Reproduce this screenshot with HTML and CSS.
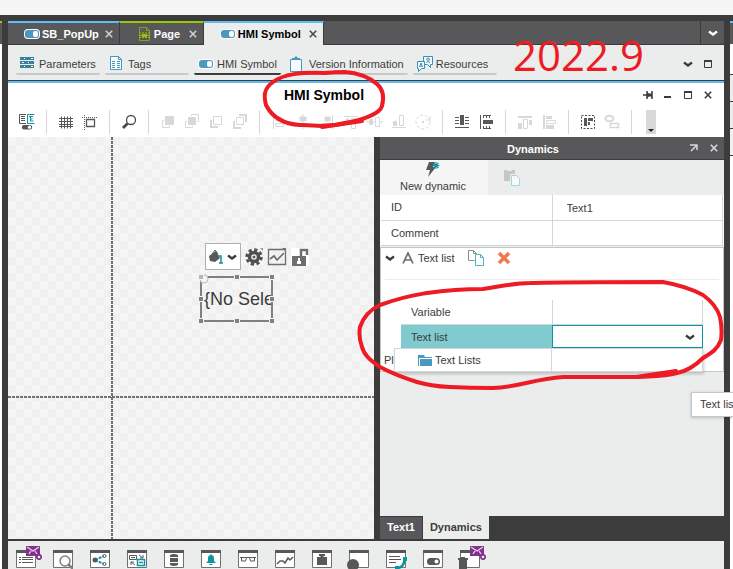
FILE: index.html
```html
<!DOCTYPE html>
<html lang="en">
<head>
    <meta charset="UTF-8">
    <title>HMI Symbol</title>
    <link rel="stylesheet" href="styles.css">
</head>
<body>

<svg width="0" height="0" class="defs">
    <defs>
        <symbol id="toggle" viewBox="0 0 16 10">
            <rect width="16" height="10" rx="4" fill="#fff"/>
            <rect x="1" y="1" width="14" height="8" rx="3" fill="#4a98bd"/>
            <rect x="9" y="2" width="5" height="6" rx="2" fill="#fff"/>
        </symbol>
        <symbol id="chevron" viewBox="0 0 10 10">
            <path d="M1 3.500l4 3 4-3" fill="none" stroke="currentColor" stroke-width="2.300"/>
        </symbol>
        <symbol id="close" viewBox="0 0 10 10">
            <path d="M1 1l8 8M9 1l-8 8" fill="none" stroke="currentColor" stroke-width="2"/>
        </symbol>
        <symbol id="box" viewBox="0 0 10 10">
            <path d="M1.500 1.500h7v7h-7z" fill="none" stroke="currentColor"/>
            <path d="M1 2h8" stroke="currentColor" stroke-width="2"/>
        </symbol>
        <!-- small window frame shared by the editors bar -->
        <symbol id="frame" viewBox="0 0 20 18">
            <path d="M.5.5h19v17H.5z" fill="#fff" stroke="#707072"/>
            <path d="M0 0h20v3H0z" fill="#58585a"/>
        </symbol>
        <symbol id="mail" viewBox="0 0 16 14">
            <path d="M0 0h14v10H0z" fill="#84318e"/>
            <path d="M1 1l6 4 6-4M3 8l2-3M11 8L9 5" fill="none" stroke="#e6d4e8" stroke-width="1.300"/>
            <circle cx="13" cy="11" r="2.200" fill="#ebedec" stroke="#84318e" stroke-width="1.700"/>
        </symbol>
    </defs>
</svg>

<div class="desktop">
    <div class="behind behind--left"></div>

    <main class="window">
        <nav class="tabs">
            <div class="tab">
                <svg class="tab__icon" width="16" height="10"><use href="#toggle"/></svg>
                <span>SB_PopUp</span>
                <button class="tab__close" aria-label="Close SB_PopUp"><svg width="8" height="8"><use href="#close"/></svg></button>
            </div>
            <div class="tab tab--page">
                <svg class="tab__icon" width="16" height="14" viewBox="0 0 16 14">
                    <path d="M3.500.5h7l3 3v10h-10z" fill="none" stroke="#7fa01a"/>
                    <path d="M10.500.5v3h3" fill="none" stroke="#7fa01a"/>
                    <path d="M3 6h11M3 10.500h11" stroke="#97bf0d" stroke-dasharray="2 1"/>
                    <path d="M6 7h5v3H6z" fill="#97bf0d"/>
                    <path d="M3 8.500h11" stroke="#97bf0d"/>
                </svg>
                <span>Page</span>
                <button class="tab__close" aria-label="Close Page"><svg width="8" height="8"><use href="#close"/></svg></button>
            </div>
            <div class="tab tab--active">
                <svg class="tab__icon" width="16" height="10"><use href="#toggle"/></svg>
                <span>HMI Symbol</span>
                <button class="tab__close" aria-label="Close HMI Symbol"><svg width="8" height="8"><use href="#close"/></svg></button>
            </div>
            <button class="tabs__more" aria-label="All editors"><svg width="10" height="10"><use href="#chevron"/></svg></button>
        </nav>

        <nav class="subnav">
            <a class="subnav__item" href="#parameters">
                <svg width="16" height="16" viewBox="0 0 16 16" shape-rendering="crispEdges">
                    <path d="M0 1h14v3H0zM0 5h14v3H0zM0 9h14v3H0z" fill="#3b7f9b"/>
                    <path d="M4 2h1v1H4zM11 2h2v1h-2zM2 6h2v1H2zM8 6h1v1H8zM4 10h1v1H4zM11 10h2v1h-2z" fill="#fff"/>
                </svg>
                <span>Parameters</span>
            </a>
            <a class="subnav__item" href="#tags">
                <svg width="16" height="16" viewBox="0 0 16 16">
                    <path d="M1.500.5h8l3 3v10h-11z" fill="#fff" stroke="#4a98bd"/>
                    <path d="M9.500.5v3h3" fill="none" stroke="#4a98bd"/>
                    <path d="M3 5.500h3M8 5.500h3M3 7.500h3M8 7.500h3M3 9.500h3M8 9.500h3M3 11.500h3M8 11.500h3" stroke="#4a98bd"/>
                </svg>
                <span>Tags</span>
            </a>
            <a class="subnav__item subnav__item--current" href="#symbol">
                <svg width="16" height="10"><use href="#toggle"/></svg>
                <span>HMI Symbol</span>
            </a>
            <a class="subnav__item" href="#version">
                <svg width="16" height="16" viewBox="0 0 16 16">
                    <path d="M.5 3.500h11v12H.5z" fill="#f7fafa" stroke="#4a98bd"/>
                    <path d="M2 4V2h2l2-2 2 2h2v2z" fill="#4a98bd"/>
                </svg>
                <span>Version Information</span>
            </a>
            <a class="subnav__item" href="#resources">
                <svg width="16" height="16" viewBox="0 0 16 16" fill="#f7fafa" stroke="#3b8fb5">
                    <path d="M6.500.5h9v8h-2v3l-3-3h-4z"/>
                    <path d="M9 3h4M11 1.500V3M9.500 7L13 3.500M9.500 4L13 7" fill="none"/>
                    <path d="M.5 5.500h7v7h-3l-3 3v-3h-1z"/>
                    <path d="M2.500 11L4 7l1.500 4M3 10h2" fill="none"/>
                </svg>
                <span>Resources</span>
            </a>
            <div class="window-buttons">
                <button aria-label="More"><svg width="10" height="10"><use href="#chevron"/></svg></button>
                <button aria-label="Maximize"><svg width="10" height="10"><use href="#box"/></svg></button>
            </div>
        </nav>

        <header class="titlebar">
            <h1 class="titlebar__text">HMI Symbol</h1>
            <div class="window-buttons">
                <button aria-label="Pin"><svg width="10" height="10" viewBox="0 0 10 10"><path d="M0 5h4M4 1v8M9 1v8" stroke="#3c3c3c" stroke-width="1.500"/><path d="M4 2l2 1.500h2L9 2v6L8 6.500H6L4 8z" fill="#3c3c3c"/></svg></button>
                <button aria-label="Minimize"><svg width="10" height="10" viewBox="0 0 10 10"><path d="M1 7h7" stroke="#3c3c3c" stroke-width="2"/></svg></button>
                <button aria-label="Maximize"><svg width="10" height="10"><use href="#box"/></svg></button>
                <button aria-label="Close"><svg width="8" height="8"><use href="#close"/></svg></button>
            </div>
        </header>

        <div class="toolbar">
            <button class="tool" aria-label="Properties">
                <svg viewBox="0 0 24 24" fill="none">
                    <path d="M11 4.500H4.500v9H11M6 6.500h4M6 8.500h4M6 10.500h4" stroke="#58585a"/>
                    <path d="M19.500 4.500h-7v9h7M14 6.500h4M15.500 7v4M15.500 9h2M15.500 11h3" stroke="#0b969e"/>
                    <path d="M9 15h6a2.200 2.200 0 0 1 0 4.400H9A2.200 2.200 0 0 1 9 15z" fill="#58585a"/>
                    <circle cx="14.500" cy="17.200" r="1.600" fill="#fff"/>
                </svg>
            </button>
            <span class="toolbar__line"></span>
            <button class="tool" aria-label="Grid">
                <svg viewBox="0 0 24 24" stroke="#58585a" fill="none"><path d="M5 8.500h14M5 11.500h14M5 14.500h14M7.500 6.500v12M10.500 6.500v12M13.500 6.500v12M16.500 6.500v12M5 16.500h14"/></svg>
            </button>
            <button class="tool" aria-label="Snap">
                <svg viewBox="0 0 24 24" stroke="#58585a" fill="none"><path d="M4 7.500h15M6.500 5v15" stroke-dasharray="1 1"/><path d="M8.500 9.500h8v7h-8z" stroke-width="1.300"/></svg>
            </button>
            <span class="toolbar__line"></span>
            <button class="tool" aria-label="Zoom">
                <svg viewBox="0 0 24 24" stroke="#4a4a4c" fill="none"><circle cx="14" cy="10" r="4.500" stroke-width="1.300"/><path d="M10.500 13.500L6 18" stroke-width="2.800"/></svg>
            </button>
            <span class="toolbar__line"></span>
            <button class="tool tool--off" disabled aria-label="Bring to front">
                <svg viewBox="0 0 24 24"><path d="M9.500 6.500h8v8h-8z" fill="currentColor"/><path d="M8 10.500H6.500v7h7V16"/></svg>
            </button>
            <button class="tool tool--off" disabled aria-label="Bring forward">
                <svg viewBox="0 0 24 24"><path d="M8.500 7.500h7v7h-7z" fill="currentColor"/><path d="M7 11.500H5.500v6h7V16M11.500 6V4.500h7v7H17"/></svg>
            </button>
            <button class="tool tool--off" disabled aria-label="Send backward">
                <svg viewBox="0 0 24 24"><path d="M9.500 6.500h8v8h-8z"/><path d="M7 10v7h7" stroke-width="2"/></svg>
            </button>
            <button class="tool tool--off" disabled aria-label="Send to back">
                <svg viewBox="0 0 24 24"><path d="M8.500 7.500h7v7h-7z"/><path d="M6 11v7h7M11 5h7v7" stroke-width="2"/></svg>
            </button>
            <span class="toolbar__line"></span>
            <button class="tool tool--off" disabled aria-label="Align left">
                <svg viewBox="0 0 24 24"><path d="M6.500 5v14M8.500 13.500h8v3h-8z"/><path d="M9 7h5v4H9z" fill="currentColor"/></svg>
            </button>
            <button class="tool tool--off" disabled aria-label="Align center">
                <svg viewBox="0 0 24 24"><path d="M12 4v15M7.500 13.500h9v3h-9z"/><path d="M9 7h6v4H9z" fill="currentColor"/></svg>
            </button>
            <button class="tool tool--off" disabled aria-label="Align right">
                <svg viewBox="0 0 24 24"><path d="M17.500 5v14M6.500 13.500h9v3h-9z"/><path d="M10 7h5v4h-5z" fill="currentColor"/></svg>
            </button>
            <button class="tool tool--off" disabled aria-label="Align top">
                <svg viewBox="0 0 24 24"><path d="M5 6.500h14M12.500 8.500h4v10h-4z"/><path d="M7 9h3v5H7z" fill="currentColor"/></svg>
            </button>
            <button class="tool tool--off" disabled aria-label="Align middle">
                <svg viewBox="0 0 24 24"><path d="M4 12h2M10 12h2M17 12h3M12.500 7.500h4v9h-4z"/><path d="M6.500 9.500h3v5h-3z" fill="currentColor"/></svg>
            </button>
            <button class="tool tool--off" disabled aria-label="Align bottom">
                <svg viewBox="0 0 24 24"><path d="M5 17.500h14M12.500 5.500h4v10h-4z"/><path d="M6.500 11.500h3v4h-3z" fill="currentColor"/></svg>
            </button>
            <button class="tool tool--off" disabled aria-label="Rotate">
                <svg viewBox="0 0 24 24"><circle cx="12" cy="12" r="7" stroke-dasharray="3 2"/><circle cx="12" cy="12" r="1" fill="#a9d5d8" stroke="none"/><path d="M19 6v4h-4"/></svg>
            </button>
            <span class="toolbar__line"></span>
            <button class="tool" aria-label="Distribute horizontally">
                <svg viewBox="0 0 24 24" stroke="#58585a" fill="none"><path d="M5 7.500h4M5 10.500h4M5 13.500h4M15 7.500h4M15 10.500h4M15 13.500h4M5 17.500h14"/><path d="M10 5h4v10h-4z" fill="#58585a" stroke="none"/></svg>
            </button>
            <button class="tool" aria-label="Distribute vertically">
                <svg viewBox="0 0 24 24" stroke="#58585a" fill="none"><path d="M6.500 5v14"/><path d="M9 10h10v4H9z" fill="#58585a" stroke="none"/><path d="M9.500 8V5.500M12.500 8V5.500M15.500 8V5.500M9 5.500h8M9.500 16v2.500M12.500 16v2.500M15.500 16v2.500M9 18.500h8"/></svg>
            </button>
            <span class="toolbar__line"></span>
            <button class="tool tool--off" disabled aria-label="Same height">
                <svg viewBox="0 0 24 24"><path d="M5 7h14" stroke-width="2"/><path d="M10.500 9.500h4v9h-4z"/><path d="M5 13h4v6H5zM16 10h3v5h-3z" fill="currentColor" stroke="none"/></svg>
            </button>
            <button class="tool tool--off" disabled aria-label="Same width">
                <svg viewBox="0 0 24 24"><path d="M7 5v14" stroke-width="2"/><path d="M9.500 10.500h9v3h-9z"/><path d="M9 6h6v3H9zM9 15h8v4H9z" fill="currentColor" stroke="none"/></svg>
            </button>
            <span class="toolbar__line"></span>
            <button class="tool" aria-label="Group">
                <svg viewBox="0 0 24 24" stroke="#4a4a4c" fill="none"><path d="M5.500 5.500h13v13h-13z" stroke-dasharray="2 1.500"/><path d="M8 8h3v8H8zM12 8h5v3h-5zM12 12h2v3h-2z" fill="#58585a" stroke="none"/></svg>
            </button>
            <button class="tool tool--off" disabled aria-label="Ungroup">
                <svg viewBox="0 0 24 24"><ellipse cx="9.500" cy="8.500" rx="4" ry="2.800" stroke-width="2"/><path d="M10.500 13.500h8v4h-8z" stroke-width="1.500"/></svg>
            </button>
            <span class="toolbar__line"></span>
            <button class="toolbar__more" aria-label="More tools"><svg width="6" height="3" viewBox="0 0 6 3"><path d="M0 0h6L3 3z" fill="#222"/></svg></button>
        </div>

        <div class="content">
            <section class="canvas">
                <div class="canvas__tools">
                    <button class="fill" aria-label="Fill color">
                        <svg width="14" height="14" viewBox="0 0 14 14"><path d="M0 6l7-5 4 7-5 4-5-1z" fill="#58585a"/><path d="M3 4l3-4 3 4" fill="none" stroke="#58585a"/><path d="M9 6h3v7M10 13h4" fill="none" stroke="#0b969e" stroke-width="1.500"/></svg>
                        <svg width="10" height="10"><use href="#chevron"/></svg>
                    </button>
                    <button class="canvas__tool" aria-label="Settings">
                        <svg width="18" height="18" viewBox="0 0 18 18" fill="none" stroke="#4f4f51"><circle cx="9" cy="9" r="4.500" stroke-width="3.500"/><circle cx="9" cy="9" r="7.300" stroke-width="2.800" stroke-dasharray="3.200 2.530"/><circle cx="9" cy="9" r="1" fill="#4f4f51"/><path d="M15 0h3v3z" fill="#999" stroke="none"/></svg>
                    </button>
                    <button class="canvas__tool" aria-label="Trend">
                        <svg width="20" height="18" viewBox="0 0 20 18" fill="none" stroke="#6e6e70"><path d="M1.500 1.500h17v15h-17z" stroke-width="1.300"/><path d="M3 11l4-3 3 4 7-7" stroke-width="1.700"/><path d="M15 0h4v4z" fill="#777" stroke="none"/></svg>
                    </button>
                    <button class="canvas__tool canvas__tool--lock" aria-label="Unlock">
                        <svg width="18" height="18" viewBox="0 0 18 18"><path d="M10 9V2h6v5" fill="none" stroke="#6e6e70" stroke-width="2.500"/><path d="M1 8h14v10H1z" fill="#6e6e70"/><path d="M7 10h2v3h1v3H6v-3h1z" fill="#fff"/></svg>
                    </button>
                </div>
                <div class="symbol-text">
                    <span class="symbol-text__value">{No Sele</span>
                    <svg class="symbol-text__handles" width="80" height="54" viewBox="0 0 80 54" fill="#808080" stroke="#f5f5f5">
                        <path d="M4 5h71v44H4z" fill="none" stroke="#808080" stroke-width="2"/>
                        <circle cx="7" cy="7" r="4" fill="#f5f5f5" stroke="#bbb"/>
                        <path d="M1.500 2.500h5v5h-5z" fill="#b5b5b5"/>
                        <path d="M37.500 2.500h5v5h-5zM72.500 2.500h5v5h-5zM1.500 24.500h5v5h-5zM72.500 24.500h5v5h-5zM1.500 46.500h5v5h-5zM37.500 46.500h5v5h-5zM72.500 46.500h5v5h-5z"/>
                    </svg>
                </div>
            </section>

            <aside class="panel">
                <header class="panel__head">
                    <h2 class="panel__title">Dynamics</h2>
                    <button aria-label="Undock"><svg width="8" height="8" viewBox="0 0 8 8"><path d="M0 1h7v5M7 1L1 7" fill="none" stroke="currentColor" stroke-width="1.500"/></svg></button>
                    <button aria-label="Close panel"><svg width="8" height="8"><use href="#close"/></svg></button>
                </header>

                <div class="actions">
                    <button class="actions__new">
                        <svg width="16" height="17" viewBox="0 0 16 17"><path d="M4 1h6L8 6h3L3 16l2-7H1z" fill="#58585a"/><path d="M11 1v7M7.500 4.500h7M8.500 2l5 5M13.500 2l-5 5" stroke="#0b969e" stroke-width="1.100"/></svg>
                        <span>New dynamic</span>
                    </button>
                    <button class="actions__paste" disabled aria-label="Paste">
                        <svg width="18" height="17" viewBox="0 0 18 17"><path d="M1 1h11v4H7v7H1z" fill="#c5c7c6"/><path d="M4 1.500h5" stroke="#ebedec"/><path d="M8.500 6.500h5l3 3v7h-8z" fill="#f4f9f9" stroke="#a5d6d9"/></svg>
                    </button>
                </div>

                <div class="props">
                    <div class="props__row">
                        <label class="props__name" for="id">ID</label>
                        <input class="props__value" id="id" type="text" value="Text1">
                    </div>
                    <div class="props__row">
                        <label class="props__name" for="comment">Comment</label>
                        <input class="props__value" id="comment" type="text">
                    </div>
                </div>

                <section class="dynamic">
                    <div class="dynamic__head">
                        <svg width="10" height="10"><use href="#chevron"/></svg>
                        <svg class="dynamic__type" width="12" height="12" viewBox="0 0 12 12" fill="none" stroke="#6e6e70" stroke-width="1.700"><path d="M1 11.500L6 1l5 10.500M3 8h6"/></svg>
                        <h3 class="dynamic__title">Text list</h3>
                        <button aria-label="Copy"><svg width="18" height="16" viewBox="0 0 18 16" fill="#fff"><path d="M7.500 10.500h-6V.5h5l3 3V4M6.500.5v3h3" stroke="#8d8d8f"/><path d="M8.500 4.500h5l3 3v8h-8zM13.500 4.500v3h3" stroke="#4fb5bb"/></svg></button>
                        <button aria-label="Delete"><svg width="14" height="14" viewBox="0 0 14 14"><path d="M2 2l10 10M12 2L2 12" stroke="#f0784f" stroke-width="3.500"/></svg></button>
                    </div>
                    <div class="fields">
                        <div class="fields__row">
                            <label class="fields__name" for="variable">Variable</label>
                            <input class="fields__value" id="variable" type="text">
                        </div>
                        <div class="fields__row fields__row--selected">
                            <label class="fields__name" for="textlist">Text list</label>
                            <div class="fields__value combo">
                                <select class="combo__select" id="textlist"><option></option></select>
                                <svg class="combo__arrow" width="10" height="10"><use href="#chevron"/></svg>
                            </div>
                        </div>
                        <div class="popup">
                            <div class="popup__name">
                                <svg width="14" height="12" viewBox="0 0 14 12"><path d="M0 1h6l1 2h7v9H0z" fill="#4a98bd"/><path d="M1.500 12V4.500H14" fill="none" stroke="#fff"/></svg>
                                <span>Text Lists</span>
                            </div>
                            <div class="popup__value"></div>
                        </div>
                    </div>
                    <div class="dynamic__more">Pl</div>
                </section>

                <div class="panel__rest"></div>
                <div class="panel-tabs">
                    <button class="panel-tabs__tab">Text1</button>
                    <button class="panel-tabs__tab panel-tabs__tab--active">Dynamics</button>
                </div>
            </aside>
        </div>

        <footer class="editors">
            <button class="editor" aria-label="Messages"><svg width="20" height="18"><use href="#frame"/><path d="M3 7.500h2M6 7.500h11M3 9.500h2M6 9.500h11M3 12.500h2M6 12.500h11" stroke="#58585a"/></svg><svg class="editor__mail" width="16" height="14"><use href="#mail"/></svg></button>
            <button class="editor" aria-label="Search"><svg width="20" height="19"><use href="#frame" height="18"/><circle cx="12" cy="11" r="5" fill="#fff" stroke="#808082" stroke-width="1.500"/><path d="M15 14l5 5" stroke="#808082" stroke-width="2.500"/></svg></button>
            <button class="editor" aria-label="Connections"><svg width="20" height="18"><use href="#frame"/><path d="M5 10l9-4M5 10l9 4" stroke="#0b969e" stroke-width="2" stroke-dasharray="3 1"/><circle cx="5" cy="10" r="2.500" fill="#58585a"/><circle cx="14.500" cy="6" r="1.500" fill="#fff" stroke="#58585a"/><circle cx="14.500" cy="14" r="1.500" fill="#fff" stroke="#58585a"/></svg></button>
            <button class="editor" aria-label="Screen changes"><svg width="20" height="18"><use href="#frame"/><path d="M2.500 5.500h7v4h-7zM4 7.500h4" fill="#fff" stroke="#58585a"/><path d="M10.500 9.500h7v6h-7zM12 12.500h4" fill="#fff" stroke="#0b969e" stroke-width="1.500"/><path d="M12 5l4 3M16 5v3h-3M8 15l-4-3M4 15v-3h3" fill="none" stroke="#58585a"/></svg></button>
            <button class="editor" aria-label="Data"><svg width="20" height="18"><use href="#frame"/><path d="M6 5q4-2 8 0v2H6zM6 8h8v4H6zM6 13h8v2q-4 2-8 0z" fill="#58585a"/></svg></button>
            <button class="editor" aria-label="Alarms"><svg width="20" height="18"><use href="#frame"/><path d="M5 13l2-2V8a3 3 0 0 1 6 0v3l2 2zM8.500 14h3v1h-3zM9.500 4h1v2h-1z" fill="#0b969e"/></svg></button>
            <button class="editor" aria-label="Preview"><svg width="20" height="18"><use href="#frame"/><path d="M2 7.500h16M3.500 8v3h4l1-3M11.500 8l1 3h4V8" fill="none" stroke="#58585a"/></svg></button>
            <button class="editor" aria-label="Trends"><svg width="20" height="18"><use href="#frame"/><path d="M2 14l3-3h3l2 2 3-5 2 2 3-3" fill="none" stroke="#58585a" stroke-width="1.500"/></svg></button>
            <button class="editor" aria-label="Recipes"><svg width="20" height="18"><use href="#frame"/><path d="M7 4h6v2h-1.500v1H15v8H5V7h3.500V6H7z" fill="#58585a"/></svg></button>
            <button class="editor editor--wide" aria-label="Objects"><svg width="22" height="19" viewBox="-2 0 22 19"><use href="#frame" width="20" height="18"/><circle cx="4" cy="15" r="6" fill="#58585a"/></svg></button>
            <button class="editor" aria-label="Text lists"><svg width="22" height="19"><use href="#frame" width="20" height="18"/><path d="M3 6.500h11M3 9.500h12M3 12.500h7" stroke="#58585a"/><path d="M11 18c5 0 7-3 8-9" fill="none" stroke="#0b969e" stroke-width="2.500"/><path d="M17 7h4v4h-4zM9 16h4v3H9z" fill="#0b969e"/></svg></button>
            <button class="editor" aria-label="Switches"><svg width="20" height="18"><use href="#frame"/><rect x="4" y="8" width="13" height="7" rx="3.500" fill="#58585a"/><circle cx="13.500" cy="11.500" r="2" fill="#fff"/></svg></button>
            <button class="editor editor--wide" aria-label="Discarded messages"><svg width="22" height="19" viewBox="-2 0 22 19"><use href="#frame" width="20" height="18"/><path d="M-2 8h10v2H7v9H-1v-9h-1zM1 7h4v1H1z" fill="#58585a"/></svg><svg class="editor__mail" width="16" height="14"><use href="#mail"/></svg></button>
        </footer>
    </main>

    <div class="behind behind--right"></div>
</div>

<div class="tooltip">Text list</div>

<!-- red pen marks -->
<svg class="marks" width="733" height="569" viewBox="0 0 733 569">
    <path d="M325 73C300 72 284 74 273 82C263 89 264 97 266 105C272 117 283 124 300 125C316 126 330 127 345 123C362 120 380 114 382 106C384 98 384 90 377 84C370 78 358 73 345 72Q335 72 325 73"/>
    <path d="M380 305C405 296 415 295 427 293Q455 289 483 289C503 286 515 283 530 283C560 282 590 282 663 282C680 285 690 288 703 295C714 303 718 310 720 317C722 327 722 333 721 340C717 350 711 353 703 358C695 366 687 371 677 373C663 377 650 376 637 377Q600 377 563 377C533 379 520 387 493 388Q470 388 450 387Q430 386 417 382Q395 375 380 367C370 360 364 355 362 347C359 339 359 333 360 327Q365 312 380 305"/>
    <path d="M636 377L676 371"/>
    <path d="M322 127L362 121"/>
</svg>
<div class="stamp">2022.9</div>

</body>
</html>
```
FILE: styles.css
```css
* {
    box-sizing: border-box;
    margin: 0;
    padding: 0;
}

:root {
    --dark: #3c3c3c;
    --bar: #58585a;
    --light: #ebedec;
    --line: #d4d6d7;
    --blue: #5fbdf5;
    --green: #97c70a;
    --teal: #0b969e;
    --red: #ed1c24;
}

body,
button,
input,
select {
    font: 11px/16px "Liberation Sans", Arial, sans-serif;
    color: #3c3c3c;
}

body {
    position: relative;
    display: flex;
    flex-direction: column;
    height: 100vh;
    padding-top: 15px;
    overflow: hidden;
    background: #f5f5f5;
}

button {
    display: flex;
    align-items: center;
    justify-content: center;
    border: 0;
    background: none;
}

input {
    border: 0;
    background: none;
    min-width: 0;
    outline: none;
}

svg {
    display: block;
    flex: none;
}

.defs {
    position: absolute;
}

.desktop {
    flex: 1;
    display: flex;
    min-height: 0;
    border-top: 6px solid var(--dark);
}

/* edges of the windows lying behind */
.behind {
    flex: none;
    background: linear-gradient(var(--green) 2px, var(--bar) 2px, var(--bar) 23px, #fff 23px);
}

.behind--left {
    width: 2px;
}

.behind--right {
    width: 3px;
    background: linear-gradient(var(--blue) 2px, var(--bar) 2px, var(--bar) 23px, #fff 23px, #fff 53px, var(--dark) 53px, var(--dark) 54px, var(--light) 54px, var(--light) 80px, var(--dark) 80px, var(--dark) 81px, var(--light) 81px, var(--light) 107px, var(--dark) 107px, var(--dark) 108px, #f0f0f0 108px, #f0f0f0 134px, var(--dark) 134px, var(--dark) 135px, #fff 135px);
}

.window {
    flex: 1;
    min-width: 0;
    display: flex;
    flex-direction: column;
    border: solid var(--dark);
    border-width: 0 6px;
    background: var(--light);
}

/* editor tabs */
.tabs {
    display: flex;
    flex: none;
    height: 24px;
    background: var(--bar);
    box-shadow: inset 0 -1px var(--dark);
}

.tab {
    display: flex;
    align-items: center;
    min-width: 84px;
    padding: 0 6px 0 16px;
    border-top: 2px solid var(--blue);
    border-right: 1px solid var(--dark);
    font-weight: bold;
    color: #fff;
}

.tab--page {
    border-top-color: var(--green);
}

.tab--active {
    background: var(--light);
    color: #000;
}

.tab__icon {
    margin-right: 2px;
}

.tab__close {
    margin-left: auto;
    padding-left: 6px;
    color: #d0d0d0;
}

.tab--active .tab__close {
    padding-left: 8px;
    color: #4a4a4a;
}

.tabs__more {
    width: 24px;
    margin-left: auto;
    border-left: 1px solid var(--dark);
    color: #fff;
}

.subnav {
    display: flex;
    flex: none;
    gap: 5px;
    height: 36px;
    padding: 8px 0 5px 8px;
    border-bottom: 1px solid var(--dark);
}

.subnav__item {
    display: flex;
    align-items: center;
    gap: 3px;
    min-width: 84px;
    padding: 2px 4px 0;
    border-bottom: 2px solid #c6c9cc;
    border-radius: 2px;
    color: #3c3c3c;
    text-decoration: none;
    white-space: nowrap;
}

.subnav__item--current {
    border-bottom-color: var(--dark);
}

.window-buttons {
    display: flex;
    margin-left: auto;
    padding-right: 6px;
}

.window-buttons button {
    width: 20px;
}

.titlebar {
    display: flex;
    flex: none;
    height: 26px;
    border-top: 2px solid var(--blue);
    background: #fff;
}

.titlebar__text {
    flex: 1;
    padding-left: 2px;
    font-size: 14px;
    line-height: 24px;
    text-align: center;
    color: #000;
}

.toolbar {
    display: flex;
    flex: none;
    align-items: center;
    height: 30px;
    padding-left: 7px;
    background: #fff;
}

.tool {
    width: 24px;
    height: 24px;
    flex: none;
}

.tool svg {
    width: 24px;
    height: 24px;
}

.tool--off {
    color: #d8d8d8;
}

.tool--off svg {
    fill: none;
    stroke: currentColor;
}

.toolbar__line {
    flex: none;
    width: 1px;
    height: 24px;
    margin: 0 7px;
    background: var(--line);
}

.toolbar__more {
    width: 10px;
    height: 24px;
    margin-left: 7px;
    padding-bottom: 2px;
    align-items: flex-end;
    background: #d8d9db;
}

.content {
    flex: 1;
    display: flex;
    min-height: 0;
    border-bottom: 2px solid var(--dark);
}

/* drawing area: two dotted guides over a checkerboard */
.canvas {
    flex: 1;
    position: relative;
    min-width: 0;
    background:
        repeating-linear-gradient(#707070 0 3px, transparent 3px 4px) 103px 0 / 2px 100% no-repeat,
        repeating-linear-gradient(90deg, #707070 0 3px, transparent 3px 4px) 0 259px / 100% 2px no-repeat,
        repeating-conic-gradient(#f0f0f0 0 25%, #f5f5f5 0 50%) 0 0 / 16px 16px;
}

.canvas__tools {
    position: absolute;
    left: 197px;
    top: 106px;
    display: flex;
    align-items: center;
    gap: 4px;
}

.fill {
    gap: 4px;
    width: 36px;
    height: 27px;
    border: 1px solid #b0b0b0;
    background: #fff;
}

.canvas__tool--lock {
    background: #fff;
}

.symbol-text {
    position: absolute;
    left: 189px;
    top: 135px;
}

.symbol-text__value {
    position: absolute;
    left: 7px;
    top: 16px;
    width: 68px;
    overflow: hidden;
    font-size: 18px;
    line-height: 22px;
    white-space: nowrap;
}

.symbol-text__handles {
    position: relative;
}

.panel {
    display: flex;
    flex-direction: column;
    flex: none;
    width: 350px;
    border-left: 6px solid var(--dark);
    background: var(--light);
}

.panel__head {
    display: flex;
    flex: none;
    height: 23px;
    border-bottom: 1px solid var(--dark);
    background: var(--bar);
    color: #fff;
}

.panel__head button {
    width: 20px;
    color: #d8d8d8;
}

.panel__title {
    flex: 1;
    padding-left: 2px;
    font-size: 11px;
    line-height: 24px;
    text-align: center;
}

.actions {
    display: flex;
    flex: none;
    height: 35px;
}

.actions__new {
    flex-direction: column;
    width: 108px;
    padding: 0 2px 0 0;
    background: #f5f5f5;
}

.actions__paste {
    width: 48px;
}

.props {
    flex: none;
    padding: 0 1px;
    background: #fff;
}

.props__row {
    display: flex;
    height: 26px;
    border: solid var(--line);
    border-width: 0 1px 1px 0;
}

.props__row:last-child {
    height: 25px;
}

.props__name {
    flex: 1;
    padding-left: 10px;
    line-height: 25px;
}

.props__value {
    width: 50%;
    padding-left: 14px;
    border-left: 1px solid var(--line);
}

.dynamic {
    flex: none;
    margin-top: 1px;
    border: 1px solid #c4c6c8;
    background: #fff;
}

.dynamic__head {
    display: flex;
    align-items: center;
    height: 32px;
    margin: 0 4px;
    padding-bottom: 11px;
    border-bottom: 1px solid var(--light);
}

.dynamic__type {
    margin: 0 4px 0 7px;
}

.dynamic__title {
    font-size: 11px;
    font-weight: normal;
}

.dynamic__head button {
    margin-left: 12px;
}

.fields {
    position: relative;
    margin: 20px 20px 0;
}

.fields__row {
    display: flex;
    height: 24px;
    border-bottom: 1px solid var(--line);
}

.fields__row:first-child {
    height: 25px;
}

.fields__row--selected {
    background: #7fcbcf;
}

.fields__name {
    flex: 1;
    padding-left: 10px;
    line-height: 24px;
}

.fields__value {
    width: 50%;
    border: solid var(--line);
    border-width: 0 1px;
}

.combo {
    position: relative;
    border: 1px solid var(--teal);
    background: #fff;
}

.combo__select {
    width: 100%;
    height: 100%;
    border: 0;
    background: none;
    appearance: none;
    outline: none;
}

.combo__arrow {
    position: absolute;
    right: 7px;
    top: 6px;
    pointer-events: none;
}

.popup {
    position: absolute;
    left: -7px;
    right: 0;
    top: 48px;
    display: flex;
    height: 24px;
    border: 1px solid var(--line);
    background: #fff;
    box-shadow: 1px 2px 3px rgba(0, 0, 0, 0.2);
}

.popup__name {
    flex: 1;
    display: flex;
    align-items: center;
    gap: 3px;
    padding-left: 23px;
}

.popup__value {
    width: 151px;
    border-left: 1px solid var(--line);
}

.dynamic__more {
    padding-left: 3px;
    line-height: 22px;
}

.panel__rest {
    flex: 1;
}

.panel-tabs {
    display: flex;
    flex: none;
    height: 23px;
    background: var(--dark);
}

.panel-tabs__tab {
    padding: 0 7px 2px;
    border: solid var(--dark);
    border-width: 1px 1px 0 0;
    background: var(--bar);
    font-weight: bold;
    color: #fff;
}

.panel-tabs__tab--active {
    border: 0;
    background: var(--light);
    color: #3c3c3c;
}

.editors {
    display: flex;
    flex: none;
    gap: 17px;
    height: 28px;
    padding: 9px 8px 0;
    overflow: hidden;
}

.editor {
    position: relative;
    flex: none;
    width: 20px;
    height: 19px;
    align-items: flex-start;
    justify-content: flex-start;
}

.editor--wide {
    justify-content: flex-end;
}

.editor__mail {
    position: absolute;
    left: 10px;
    top: -4px;
}

.tooltip {
    position: absolute;
    left: calc(100% - 42px);
    top: 392px;
    padding: 3px 8px 4px;
    border: 1px solid #c4c6c8;
    background: #fff;
    box-shadow: 0 1px 3px rgba(0, 0, 0, 0.2);
    white-space: nowrap;
}

.marks {
    position: absolute;
    left: 0;
    top: 0;
    fill: none;
    stroke: var(--red);
    stroke-width: 4;
    stroke-linecap: round;
    pointer-events: none;
}

.stamp {
    position: absolute;
    left: 513px;
    top: 31px;
    font: 42px/48px "Open Sans", sans-serif;
    color: var(--red);
    pointer-events: none;
}
```
